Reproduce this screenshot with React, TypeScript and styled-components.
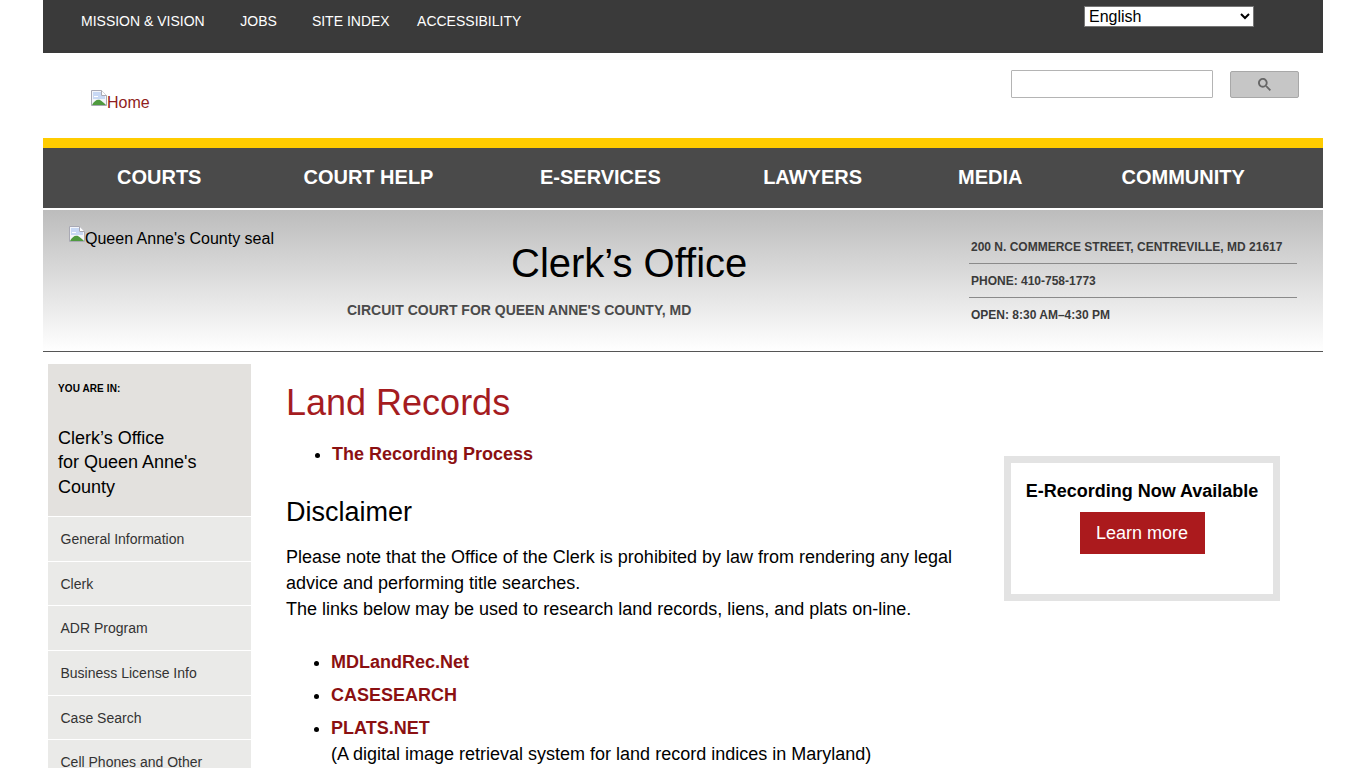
import styled, { createGlobalStyle } from "styled-components";

const GlobalStyle = createGlobalStyle`
  html, body {
    margin: 0;
    padding: 0;
    height: 768px;
    overflow: hidden;
    background: #fff;
    font-family: "Liberation Sans", Arial, sans-serif;
  }
`;

const Page = styled.div`
  width: 1280px;
  margin-left: 43px;
`;

const TopBar = styled.div`
  height: 53px;
  background: #3a3a3a;
  display: flex;
  justify-content: space-between;
  align-items: flex-start;
  padding: 0 69px 0 38px;
  box-sizing: border-box;
`;

const TopLinks = styled.div`
  display: flex;
  padding-top: 12px;
`;

const TopLink = styled.a<{ $gap: number }>`
  color: #fff;
  font-size: 14px;
  line-height: 18px;
  margin-left: ${(p) => p.$gap}px;
`;

const LangSelect = styled.select`
  width: 170px;
  height: 21px;
  margin-top: 6px;
  border: 1px solid #767676;
  background: #fff;
  color: #000;
  font-family: "Liberation Sans", Arial, sans-serif;
  font-size: 16px;
  padding: 0;
`;

const HeaderRow = styled.div`
  height: 85px;
  display: flex;
  justify-content: space-between;
  align-items: flex-start;
  padding: 0 24px 0 48px;
`;

const Logo = styled.a`
  display: flex;
  align-items: flex-start;
  margin-top: 37px;
  color: #8f1d21;
  font-size: 16px;
  line-height: 26px;
`;

const SearchBox = styled.div`
  display: flex;
  margin-top: 17px;
`;

const SearchInput = styled.input`
  width: 202px;
  height: 28px;
  box-sizing: border-box;
  border: 1px solid #b4b4b4;
  background: #fff;
  padding: 0;
  border-radius: 1px;
`;

const SearchButton = styled.button`
  width: 69px;
  height: 27px;
  margin: 1px 0 0 17px;
  box-sizing: border-box;
  background: #c6c6c6;
  border: 1px solid #a8a8a8;
  border-radius: 2px;
  display: flex;
  align-items: center;
  justify-content: center;
  padding: 0;
`;

const MainNav = styled.nav`
  height: 58px;
  padding: 0 0 2px 74px;
  border-top: 10px solid #ffcc00;
  border-bottom: 1px solid #fff;
  background: #4a4a4a;
  display: flex;
  align-items: center;
`;

const NavItem = styled.a<{ $gap: number }>`
  color: #fff;
  font-size: 20px;
  font-weight: 700;
  margin-left: ${(p) => p.$gap}px;
`;

const Banner = styled.div`
  height: 142px;
  margin-top: 1px;
  box-sizing: border-box;
  border-bottom: 1px solid #555;
  background: linear-gradient(#bcbcbc, #fff);
  display: flex;
`;

const Seal = styled.div`
  width: 231px;
  padding: 16px 0 0 26px;
  box-sizing: border-box;
  display: flex;
  align-items: flex-start;
  font-size: 16px;
  line-height: 26px;
  color: #000;
  white-space: nowrap;
`;

const BannerCenter = styled.div`
  width: 695px;
`;

const OfficeTitle = styled.h1`
  margin: 29px 0 0;
  padding-left: 237px;
  font-size: 40px;
  line-height: 48px;
  font-weight: 400;
  color: #000;
`;

const CourtName = styled.div`
  margin: 14px 0 0 73px;
  font-size: 14px;
  line-height: 18px;
  font-weight: 700;
  color: #4a4a4a;
`;

const Contact = styled.ul`
  list-style: none;
  margin: 20px 0 0;
  padding: 0;
  width: 328px;
`;

const ContactRow = styled.li`
  height: 34px;
  box-sizing: border-box;
  padding: 9px 0 0 2px;
  font-size: 12px;
  line-height: 16px;
  font-weight: 700;
  color: #3a3a3a;
  border-bottom: 1px solid #8a8a8a;
  &:last-child {
    border-bottom: 0;
  }
`;

const Columns = styled.div`
  display: flex;
  align-items: flex-start;
  margin-top: 12px;
`;

const Sidebar = styled.aside`
  width: 203px;
  margin-left: 5px;
  flex: none;
`;

const SideHead = styled.div`
  height: 152px;
  box-sizing: border-box;
  background: #e3e1de;
  padding: 18px 10px 0;
  color: #000;
`;

const YouAreIn = styled.div`
  font-size: 10px;
  line-height: 13px;
  font-weight: 700;
  letter-spacing: 0.1px;
`;

const SideTitle = styled.div`
  margin-top: 31px;
  font-size: 18px;
  line-height: 24.4px;
`;

const SideItem = styled.a`
  display: block;
  box-sizing: border-box;
  margin-top: 1px;
  min-height: 43.7px;
  padding: 13px 12px 12px 12.5px;
  background: #eaeae8;
  color: #333;
  font-size: 14px;
  line-height: 18px;
`;

const Main = styled.main`
  width: 1000px;
  margin-left: 35px;
  padding-right: 6px;
  box-sizing: border-box;
`;

const PageTitle = styled.h2`
  margin: 16px 0 0;
  font-size: 36px;
  line-height: 46px;
  font-weight: 400;
  color: #a51c1f;
`;

const Links = styled.ul<{ $top: number; $pad: number }>`
  margin: ${(p) => p.$top}px 0 0;
  padding: 0 0 0 ${(p) => p.$pad}px;
  width: 660px;
`;

const LinkItem = styled.li`
  font-size: 18px;
  line-height: 26px;
  margin-bottom: 7px;
  color: #000;
`;

const BoldLink = styled.a`
  color: #8b1012;
  font-weight: 700;
`;

const Callout = styled.div`
  float: right;
  width: 276px;
  height: 145px;
  margin-top: 30px;
  box-sizing: border-box;
  border: 7px solid #e3e3e3;
  text-align: center;
  padding-top: 15px;
`;

const CalloutTitle = styled.div`
  font-size: 18px;
  line-height: 26px;
  font-weight: 700;
  color: #000;
`;

const LearnMore = styled.a`
  display: inline-block;
  width: 125px;
  height: 42px;
  margin-top: 8px;
  background: #ab1a1d;
  color: #fff;
  font-size: 18px;
  line-height: 42px;
`;

const SubTitle = styled.h3`
  margin: 27px 0 0;
  font-size: 27px;
  line-height: 36px;
  font-weight: 400;
  color: #000;
`;

const Para = styled.p`
  margin: 14px 0 0;
  width: 680px;
  font-size: 18px;
  line-height: 26px;
  color: #000;
`;

function BrokenImage() {
  return (
    <svg width="16" height="16" viewBox="0 0 16 16" style={{ flex: "none" }}>
      <path d="M.5.5h10l5 5v10H.5z" fill="#f4f6fb" stroke="#a9a9b4" />
      <path d="M10.5.5v5h5" fill="#fff" stroke="#a9a9b4" />
      <path d="M2 2h8v4h4v3H2z" fill="#c8d8f4" />
      <path d="M3 6h4v1H3z" fill="#fff" />
      <path d="M1 15c2-4 5-6 8-5 2 1 4 3 6 5z" fill="#4f9a3f" />
    </svg>
  );
}

const topLinks = [
  { label: "MISSION & VISION", gap: 0 },
  { label: "JOBS", gap: 35.6 },
  { label: "SITE INDEX", gap: 35 },
  { label: "ACCESSIBILITY", gap: 27.4 },
];

const navItems = [
  { label: "COURTS", gap: 0 },
  { label: "COURT HELP", gap: 102 },
  { label: "E-SERVICES", gap: 106.5 },
  { label: "LAWYERS", gap: 102.4 },
  { label: "MEDIA", gap: 96 },
  { label: "COMMUNITY", gap: 99 },
];

const sideItems = [
  "General Information",
  "Clerk",
  "ADR Program",
  "Business License Info",
  "Case Search",
  "Cell Phones and Other Electronic Devices",
];

export default function App() {
  return (
    <>
      <GlobalStyle />
      <Page>
        <TopBar>
          <TopLinks>
            {topLinks.map((l) => (
              <TopLink key={l.label} $gap={l.gap}>
                {l.label}
              </TopLink>
            ))}
          </TopLinks>
          <LangSelect defaultValue="English">
            <option>English</option>
          </LangSelect>
        </TopBar>
        <HeaderRow>
          <Logo>
            <BrokenImage />
            Home
          </Logo>
          <SearchBox>
            <SearchInput />
            <SearchButton aria-label="search">
              <svg width="13" height="13" viewBox="0 0 13 13">
                <path
                  d="m4.8495 7.8226c0.82666 0 1.5262-0.29146 2.0985-0.87438 0.57232-0.58292 0.86378-1.2877 0.87438-2.1144 0.010599-0.82666-0.28086-1.5262-0.87438-2.0985-0.59352-0.57232-1.293-0.86378-2.0985-0.87438-0.8055-0.010599-1.5103 0.28086-2.1144 0.87438-0.60414 0.59352-0.8956 1.293-0.87438 2.0985 0.021197 0.8055 0.31266 1.5103 0.87438 2.1144 0.56172 0.60414 1.2665 0.8956 2.1144 0.87438zm4.4695 0.2115 3.681 3.6819-1.259 1.284-3.6817-3.7 0.0019784-0.69479-0.090043-0.098846c-0.87973 0.76087-1.92 1.1413-3.1207 1.1413-1.3553 0-2.5025-0.46363-3.4417-1.3909s-1.4088-2.0686-1.4088-3.4239c0-1.3553 0.4696-2.4966 1.4088-3.4239 0.9392-0.92727 2.0864-1.3969 3.4417-1.4088 1.3553-0.011889 2.4906 0.45771 3.406 1.4088 0.9154 0.95107 1.379 2.0924 1.3909 3.4239 0 1.2126-0.38043 2.2588-1.1413 3.1385l0.098834 0.090049z"
                  fill="#666"
                />
              </svg>
            </SearchButton>
          </SearchBox>
        </HeaderRow>
        <MainNav>
          {navItems.map((n) => (
            <NavItem key={n.label} $gap={n.gap}>
              {n.label}
            </NavItem>
          ))}
        </MainNav>
        <Banner>
          <Seal>
            <BrokenImage />
            Queen Anne's County seal
          </Seal>
          <BannerCenter>
            <OfficeTitle>Clerk’s Office</OfficeTitle>
            <CourtName>CIRCUIT COURT FOR QUEEN ANNE'S COUNTY, MD</CourtName>
          </BannerCenter>
          <Contact>
            <ContactRow>200 N. COMMERCE STREET, CENTREVILLE, MD 21617</ContactRow>
            <ContactRow>PHONE: 410-758-1773</ContactRow>
            <ContactRow>OPEN: 8:30 AM–4:30 PM</ContactRow>
          </Contact>
        </Banner>
        <Columns>
          <Sidebar>
            <SideHead>
              <YouAreIn>YOU ARE IN:</YouAreIn>
              <SideTitle>
                Clerk’s Office
                <br />
                for Queen Anne's County
              </SideTitle>
            </SideHead>
            {sideItems.map((s) => (
              <SideItem key={s}>{s}</SideItem>
            ))}
          </Sidebar>
          <Main>
            <PageTitle>Land Records</PageTitle>
            <Callout>
              <CalloutTitle>E-Recording Now Available</CalloutTitle>
              <LearnMore>Learn more</LearnMore>
            </Callout>
            <Links $top={15} $pad={46}>
              <LinkItem>
                <BoldLink>The Recording Process</BoldLink>
              </LinkItem>
            </Links>
            <SubTitle>Disclaimer</SubTitle>
            <Para>
              Please note that the Office of the Clerk is prohibited by law from rendering any legal
              advice and performing title searches.
              <br />
              The links below may be used to research land records, liens, and plats on-line.
            </Para>
            <Links $top={27} $pad={45}>
              <LinkItem>
                <BoldLink>MDLandRec.Net</BoldLink>
              </LinkItem>
              <LinkItem>
                <BoldLink>CASESEARCH</BoldLink>
              </LinkItem>
              <LinkItem>
                <BoldLink>PLATS.NET</BoldLink>
                <br />
                (A digital image retrieval system for land record indices in Maryland)
              </LinkItem>
            </Links>
          </Main>
        </Columns>
      </Page>
    </>
  );
}
